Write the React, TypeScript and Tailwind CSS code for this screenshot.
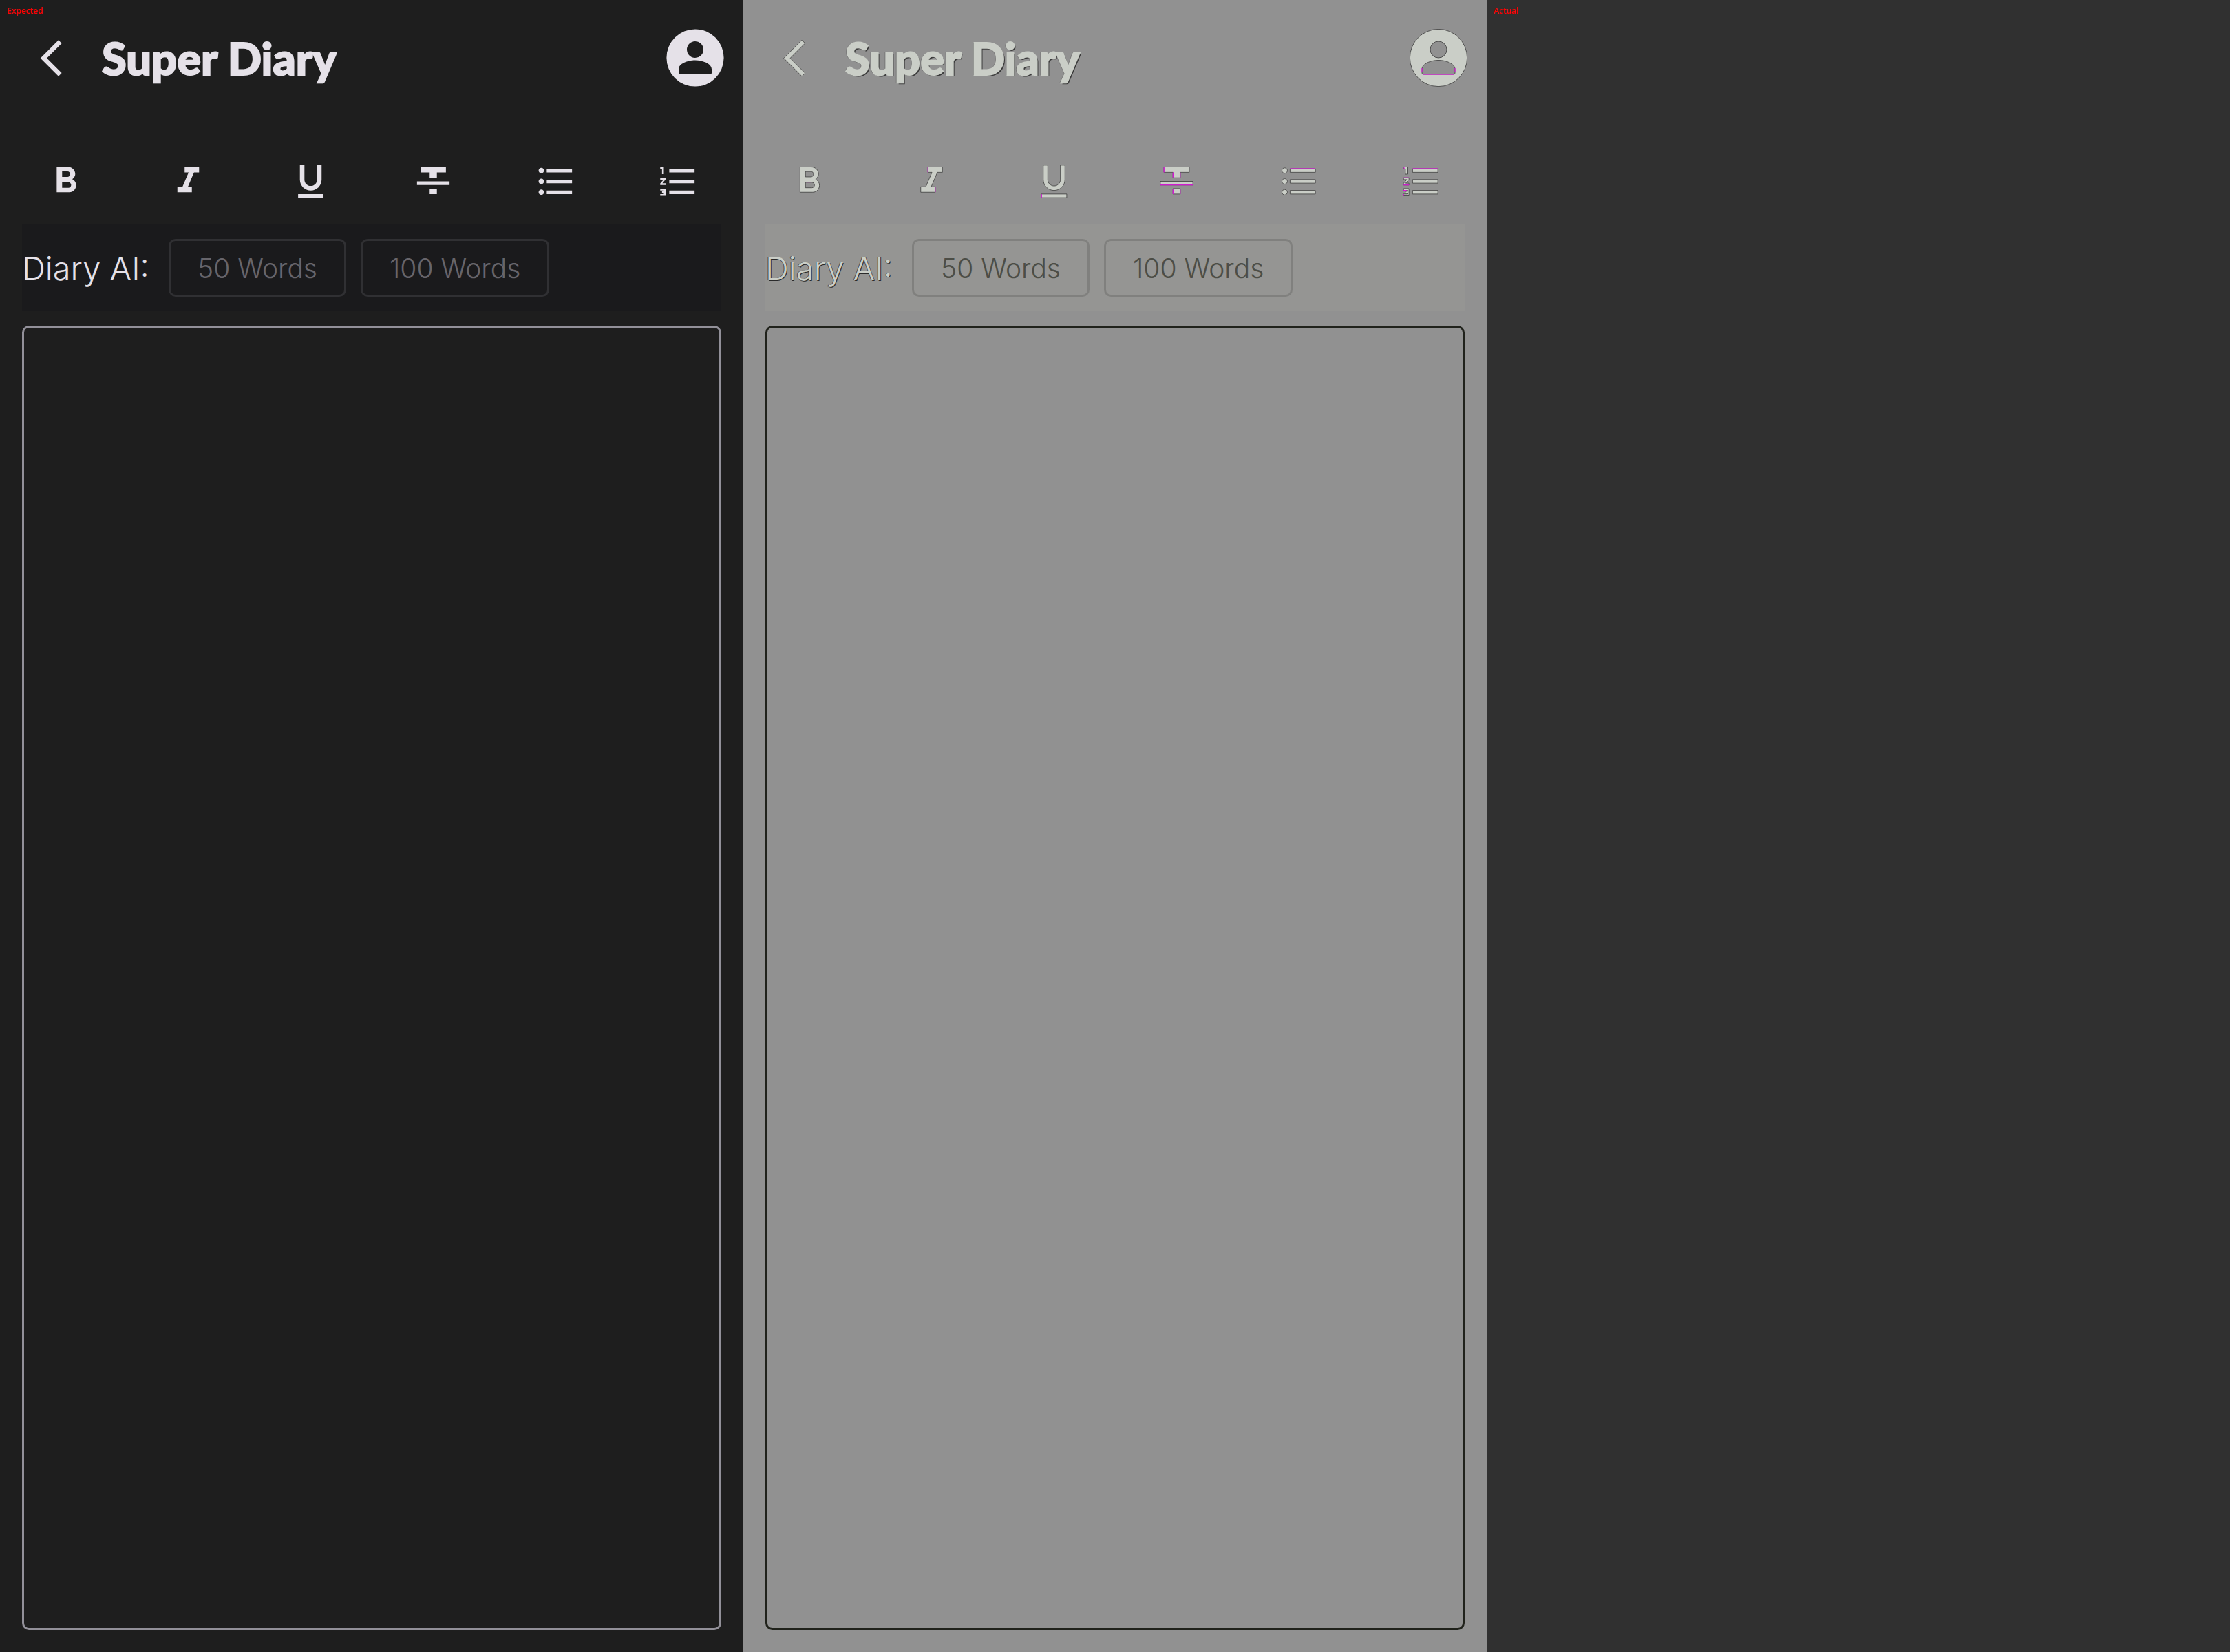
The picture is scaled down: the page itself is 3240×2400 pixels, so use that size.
import type { ReactNode } from "react";

type Tone = "dark" | "delta";

interface Theme {
  panel: string;
  ink: string;
  bar: string;
  chip: string;
  editor: string;
  edge: string;
  accent: string;
  titleEdge: string;
  labelEdge: string;
}

const themes: Record<Tone, Theme> = {
  dark: {
    panel: "bg-[#1e1e1e]",
    ink: "text-[#e5e1e8]",
    bar: "bg-[#1a1a1c]",
    chip: "border-[#303033] text-[#67656b]",
    editor: "border-[#929099]",
    edge: "none",
    accent: "none",
    titleEdge: "",
    labelEdge: "",
  },
  delta: {
    panel: "bg-[#919191]",
    ink: "text-[#cacec7]",
    bar: "bg-[#959593]",
    chip: "border-[#80807e] text-[#4c4d46]",
    editor: "border-[#20221b]",
    edge: "#3a3a3a",
    accent: "#f000f0",
    titleEdge: "[text-shadow:2px_2px_0_#3a3a3a,-2px_0_0_#777777]",
    labelEdge: "[text-shadow:1px_1px_0_#2a2a2a,-1px_0_0_#444444]",
  },
};

interface Tool {
  label: string;
  d: string;
  accent: string;
}

const tools: Tool[] = [
  {
    label: "Bold",
    d: "M15.6 10.79c.97-.67 1.65-1.77 1.65-2.79 0-2.26-1.75-4-4-4H7v14h7.04c2.09 0 3.71-1.7 3.71-3.79 0-1.52-.86-2.82-2.15-3.42zM10 6.5h3c.83 0 1.5.67 1.5 1.5s-.67 1.5-1.5 1.5h-3v-3zm3.5 9H10v-3h3.5c.83 0 1.5.67 1.5 1.5s-.67 1.5-1.5 1.5z",
    accent: "M10.5 12.4h2.6",
  },
  {
    label: "Italic",
    d: "M10 4v3h2.21l-3.42 8H6v3h8v-3h-2.21l3.42-8H18V4z",
    accent: "M10 4v3M14 15v3",
  },
  {
    label: "Underline",
    d: "M12 17c3.31 0 6-2.69 6-6V3h-2.5v8c0 1.93-1.57 3.5-3.5 3.5S8.5 12.93 8.5 11V3H6v8c0 3.31 2.69 6 6 6zm-7 2v2h14v-2H5z",
    accent: "M5 19v2",
  },
  {
    label: "Strikethrough",
    d: "M10 19h4v-3h-4v3zM5 4v3h5v3h4V7h5V4H5zM3 14h18v-2H3v2z",
    accent: "M5 4v3M10 7v2.8M14 7v2.8M3 14h18M10 16v3M14 16v3",
  },
  {
    label: "Bulleted list",
    d: "M4 10.5c-.83 0-1.5.67-1.5 1.5s.67 1.5 1.5 1.5 1.5-.67 1.5-1.5-.67-1.5-1.5-1.5zm0-6c-.83 0-1.5.67-1.5 1.5S3.17 7.5 4 7.5 5.5 6.83 5.5 6 4.83 4.5 4 4.5zm0 12c-.83 0-1.5.68-1.5 1.5s.68 1.5 1.5 1.5 1.5-.68 1.5-1.5-.67-1.5-1.5-1.5zM7 19h14v-2H7v2zm0-6h14v-2H7v2zm0-8v2h14V5H7z",
    accent: "M7 5h14",
  },
  {
    label: "Numbered list",
    d: "M2 17h2v.5H3v1h1v.5H2v1h3v-4H2v1zm1-9h1V4H2v1h1v3zm-1 3h1.8L2 13.1v.9h3v-1H3.2L5 10.9V10H2v1zm5-6v2h14V5H7zm0 14h14v-2H7v2zm0-6h14v-2H7v2z",
    accent: "M7 5h14M2 10h3M2 14h3M2 17h1.6M2 19v1M2 4.6h1",
  },
];

function Glyph({ d, accent, theme }: { d: string; accent?: string; theme: Theme }) {
  return (
    <svg viewBox="0 0 24 24" className="size-[63px]" aria-hidden="true">
      <path d={d} fill="currentColor" stroke={theme.edge} strokeWidth="0.3" />
      {accent && <path d={accent} fill="none" stroke={theme.accent} strokeWidth="0.4" />}
    </svg>
  );
}

function Avatar({ theme }: { theme: Theme }) {
  return (
    <svg viewBox="0 0 84 84" className="size-[84px]" aria-hidden="true">
      <path
        fill="currentColor"
        fillRule="evenodd"
        stroke={theme.edge}
        strokeWidth="0.8"
        d="M42 0.4a41.6 41.6 0 1 1 0 83.2a41.6 41.6 0 1 1 0-83.2zM42 18a12 12 0 1 0 0 24a12 12 0 1 0 0-24zM42 45.5C31 45.5 18 50.5 18 58.500V64q0 2 2 2H64q2 0 2-2V58.500C66 50.500 53 45.500 42 45.500z"
      />
      <path d="M20 66H64M18 57v6M66 57v6" fill="none" stroke={theme.accent} strokeWidth="1" />
    </svg>
  );
}

function Chip({ theme, children }: { theme: Theme; children: ReactNode }) {
  return (
    <button
      type="button"
      className={`h-[84px] rounded-[10px] border-3 px-[39px] text-[39px] leading-none font-light whitespace-nowrap ${theme.chip}`}
    >
      {children}
    </button>
  );
}

function DiaryScreen({ tone, caption }: { tone: Tone; caption?: string }) {
  const theme = themes[tone];
  return (
    <section
      className={`relative flex min-w-0 flex-col px-8 pb-8 font-[Inter,sans-serif] ${theme.panel} ${theme.ink}`}
    >
      {caption && <Caption>{caption}</Caption>}
      <header className="flex h-[168px] items-center">
        <button type="button" aria-label="Back" className="ml-[11px]">
          <Glyph d="M17.77 3.77L16 2 6 12l10 10 1.77-1.77L9.54 12z" theme={theme} />
        </button>
        <h1
          className={`ml-[42px] flex-1 font-[Lato,sans-serif] text-[65px] leading-none font-black whitespace-nowrap [-webkit-text-stroke:2px_currentColor] ${theme.titleEdge}`}
        >
          Super Diary
        </h1>
        <button type="button" aria-label="Account" className="-mr-1">
          <Avatar theme={theme} />
        </button>
      </header>

      <div role="toolbar" aria-label="Formatting" className="mt-8 flex justify-between">
        {tools.map((tool) => (
          <button
            key={tool.label}
            type="button"
            aria-label={tool.label}
            className="flex size-[126px] items-center justify-center"
          >
            <Glyph d={tool.d} accent={tool.accent} theme={theme} />
          </button>
        ))}
      </div>

      <div className={`flex h-[126px] items-center gap-[21px] ${theme.bar}`}>
        <span
          className={`min-w-48 text-[47px] leading-none font-light whitespace-nowrap ${theme.labelEdge}`}
        >
          Diary AI:
        </span>
        <Chip theme={theme}>50 Words</Chip>
        <Chip theme={theme}>100 Words</Chip>
      </div>

      <textarea
        aria-label="Diary entry"
        className={`mt-[21px] w-full flex-1 resize-none rounded-[10px] border-3 bg-transparent p-8 text-[39px] outline-none ${theme.editor}`}
      />
    </section>
  );
}

function Caption({ children }: { children: ReactNode }) {
  return (
    <span className="absolute top-2 left-[10px] font-['Noto_Sans',sans-serif] text-[12px] leading-4 font-medium text-[#ff0000]">
      {children}
    </span>
  );
}

export default function App() {
  return (
    <main className="grid min-h-screen grid-cols-3 bg-[#303030]">
      <DiaryScreen tone="dark" caption="Expected" />
      <DiaryScreen tone="delta" />
      <section className="relative bg-[#303030]">
        <Caption>Actual</Caption>
      </section>
    </main>
  );
}
